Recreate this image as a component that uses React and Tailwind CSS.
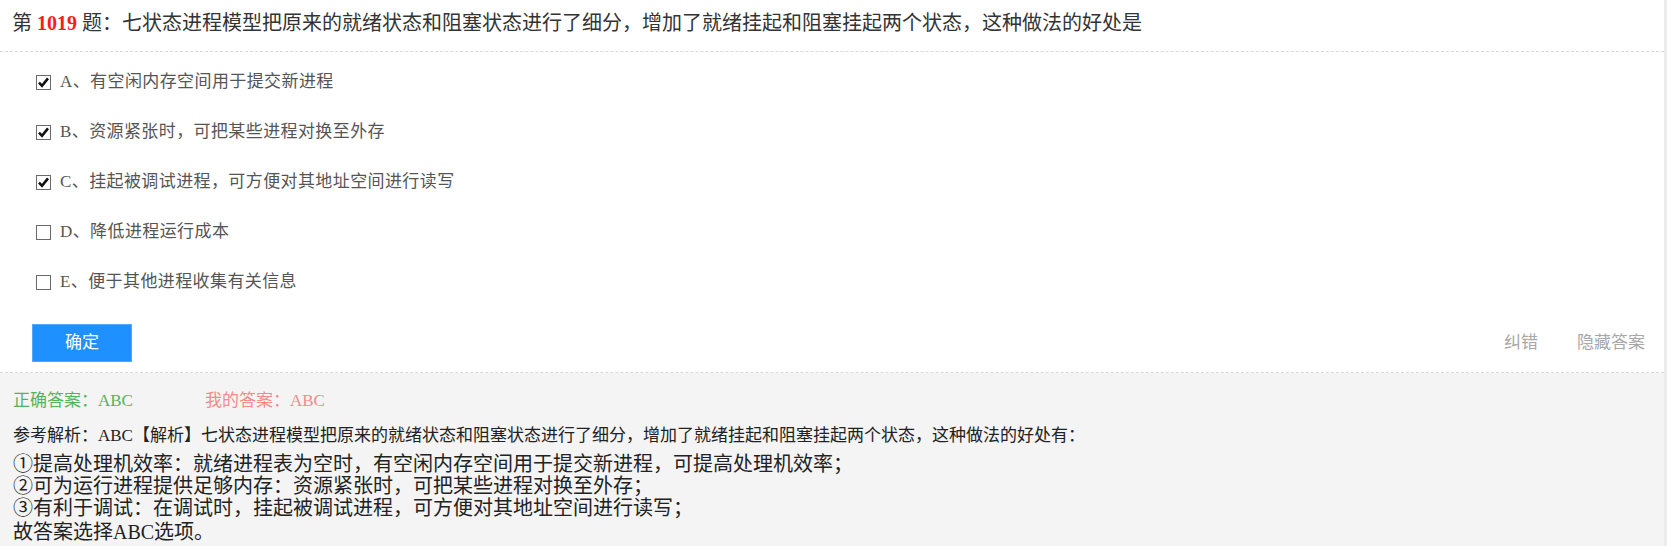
import React from "react";

const options = [
  { key: "A", text: "有空闲内存空间用于提交新进程", checked: true },
  { key: "B", text: "资源紧张时，可把某些进程对换至外存", checked: true },
  { key: "C", text: "挂起被调试进程，可方便对其地址空间进行读写", checked: true },
  { key: "D", text: "降低进程运行成本", checked: false },
  { key: "E", text: "便于其他进程收集有关信息", checked: false },
];

function Box({ checked }) {
  return (
    <svg width="15" height="15" viewBox="0 0 15 15" className="shrink-0">
      <rect x="0.5" y="0.5" width="14" height="14" fill="#fff" stroke="#6a6a6a" />
      {checked && (
        <path d="M3 7.6 L6 10.8 L12 3.4" fill="none" stroke="#111" strokeWidth="2.6" />
      )}
    </svg>
  );
}

function Option({ item }) {
  return (
    <div className="h-[50px] flex items-center pl-[36px] pt-[2px]">
      <Box checked={item.checked} />
      <span className="ml-[9px] text-[17px] tracking-[0.4px] text-[#555]">
        {item.key}、{item.text}
      </span>
    </div>
  );
}

export default function App() {
  return (
    <div className="w-[1667px] h-[546px] flex bg-white overflow-hidden font-['Liberation_Serif','Noto_Sans_CJK_SC',serif]">
      <div className="flex-1 flex flex-col">
        <div className="h-[52px] flex items-center pl-[12px] pb-[5px] border-b border-dashed border-[#d9d9d9] text-[20px] text-[#333]">
          <span>
            第 <b className="text-[#ff1a1a]">1019</b> 题：七状态进程模型把原来的就绪状态和阻塞状态进行了细分，增加了就绪挂起和阻塞挂起两个状态，这种做法的好处是
          </span>
        </div>

        <div className="pt-[4px]">
          {options.map((o) => (
            <Option key={o.key} item={o} />
          ))}
        </div>

        <div className="flex items-center justify-between pl-[32px] pr-[19px] pt-[18px] pb-[10px] border-b border-dashed border-[#d9d9d9]">
          <button className="w-[100px] h-[38px] bg-[#1e90ff] border border-[#55a8ff] text-white text-[17px]">
            确定
          </button>
          <div className="flex gap-[39px] text-[17px] text-[#a8a8a8]">
            <span>纠错</span>
            <span>隐藏答案</span>
          </div>
        </div>

        <div className="flex-1 bg-[#f4f4f4] pl-[13px] pt-[16px]">
          <div className="flex text-[17px] leading-[24px]">
            <span className="w-[192px] text-[#52b45a]">正确答案：ABC</span>
            <span className="text-[#f48a8a]">我的答案：ABC</span>
          </div>
          <div className="mt-[11px] text-[17px] leading-[24px] text-[#222]">
            参考解析：ABC【解析】七状态进程模型把原来的就绪状态和阻塞状态进行了细分，增加了就绪挂起和阻塞挂起两个状态，这种做法的好处有：
          </div>
          <div className="mt-[5px] text-[20px] leading-[22px] text-[#222]">
            <div>①提高处理机效率：就绪进程表为空时，有空闲内存空间用于提交新进程，可提高处理机效率；</div>
            <div>②可为运行进程提供足够内存：资源紧张时，可把某些进程对换至外存；</div>
            <div>③有利于调试：在调试时，挂起被调试进程，可方便对其地址空间进行读写；</div>
            <div className="mt-[2px]">故答案选择ABC选项。</div>
          </div>
        </div>
      </div>
      <div className="w-[3px] bg-[#ececec]" />
    </div>
  );
}
